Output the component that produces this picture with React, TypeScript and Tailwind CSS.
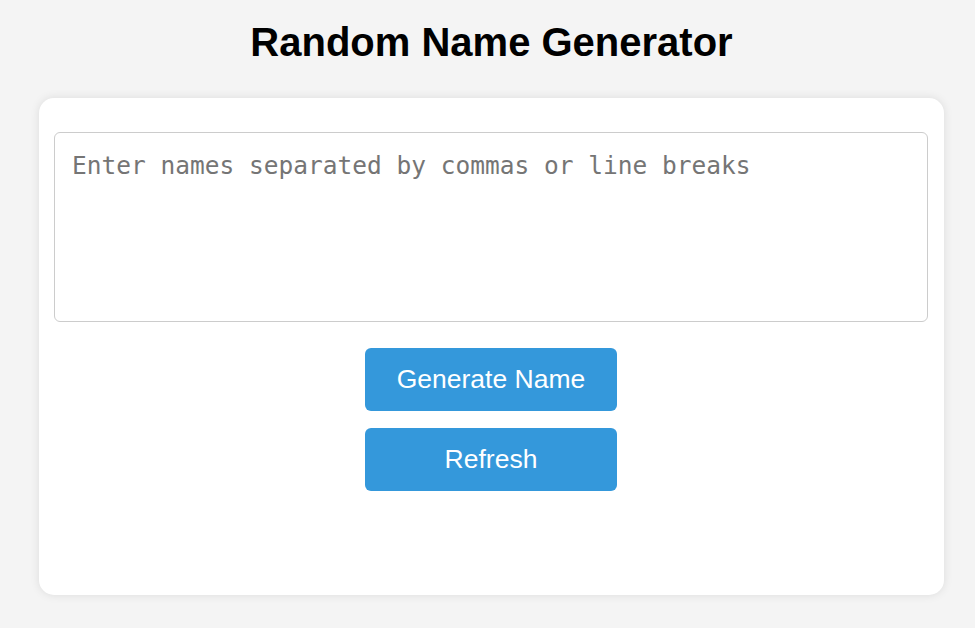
import { useState } from 'react'

export default function App() {
  const [names, setNames] = useState('')
  const [picked, setPicked] = useState('')

  const generate = () => {
    const list = names
      .split(/[,\n]/)
      .map((n) => n.trim())
      .filter(Boolean)
    if (!list.length) return
    setPicked(list[Math.floor(Math.random() * list.length)])
  }

  const refresh = () => {
    setNames('')
    setPicked('')
  }

  return (
    <div className="min-h-screen bg-[#f4f4f4] font-['Liberation_Sans',Arial,sans-serif] pl-[39px] pr-[31px] pt-[19px]">
      <h1 className="text-center text-[40px] leading-[46px] font-bold text-black">Random Name Generator</h1>

      {/* Card */}
      <div className="mt-[33px] h-[497px] rounded-[15px] bg-white shadow-[0_0_10px_rgba(0,0,0,0.1)] pl-[15px] pr-[16px] pt-[34px]">
        <textarea
          value={names}
          onChange={(e) => setNames(e.target.value)}
          placeholder="Enter names separated by commas or line breaks"
          className="block w-full h-[190px] resize-none rounded-[6px] border border-[#cccccc] px-[17px] pt-[18px] font-['DejaVu_Sans_Mono',monospace] text-[24.5px] leading-[29px] text-[#333] placeholder:text-[#757575] outline-none"
        />

        <div className="mt-[26px] flex flex-col items-center gap-[17px]">
          <button
            onClick={generate}
            className="w-[252px] h-[63px] rounded-[6px] bg-[#3498db] text-white text-[26.5px]"
          >
            Generate Name
          </button>
          <button
            onClick={refresh}
            className="w-[252px] h-[63px] rounded-[6px] bg-[#3498db] text-white text-[26.5px]"
          >
            Refresh
          </button>
          {picked ? <p className="text-[26px] font-bold text-[#333]">{picked}</p> : null}
        </div>
      </div>
    </div>
  )
}
